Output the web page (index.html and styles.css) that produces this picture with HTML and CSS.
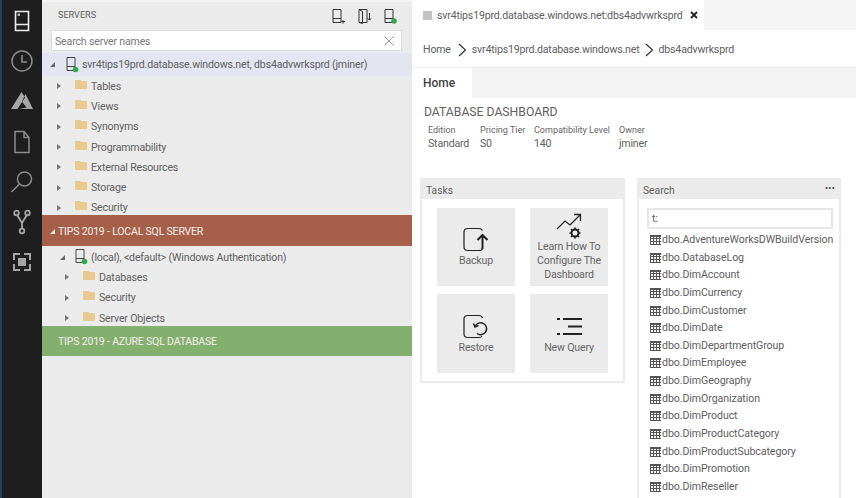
FILE: index.html
```html
<!DOCTYPE html>
<html lang="en">

<head>
    <meta charset="UTF-8">
    <title>Azure Data Studio</title>
    <link rel="stylesheet" href="styles.css">
</head>

<body>
    <div id="app">
        <nav class="activity">
            <div class="act"><svg width="16" height="22" viewBox="0 0 16 22"><path d="M1.500 1.500h13v19h-13zM1.500 14.500h13" fill="none" stroke="#eee" stroke-width="1.600"/><rect x="3.500" y="3.500" width="2.500" height="2.500" fill="#aaa"/></svg></div>
            <div class="act"><svg width="24" height="24" viewBox="0 0 24 24"><circle cx="12" cy="12" r="10" fill="none" stroke="#8c8c8c" stroke-width="1.500"/><path d="M12 6v7h5" fill="none" stroke="#8c8c8c" stroke-width="1.600"/></svg></div>
            <div class="act"><svg width="24" height="20" viewBox="0 0 24 20"><path d="M11.500 1L1 18h6.500L15 6.500zM15.500 3L23 18H9.500l7-1.500-4.500-6z" fill="#a6a6a6"/></svg></div>
            <div class="act"><svg width="18" height="24" viewBox="0 0 18 24"><path d="M2 1.500h9l5 6v15H2zM11 1.500v6h5" fill="none" stroke="#8c8c8c" stroke-width="1.500"/></svg></div>
            <div class="act"><svg width="24" height="24" viewBox="0 0 24 24"><circle cx="14.500" cy="9" r="7" fill="none" stroke="#8c8c8c" stroke-width="1.500"/><path d="M9.500 14L1.500 22" fill="none" stroke="#8c8c8c" stroke-width="1.600"/></svg></div>
            <div class="act"><svg width="18" height="26" viewBox="0 0 18 26"><g fill="none" stroke="#a6a6a6" stroke-width="1.800"><circle cx="3.500" cy="4" r="2.300"/><circle cx="14.500" cy="4" r="2.300"/><circle cx="9" cy="22" r="2.300"/><path d="M4.500 6.500L9 14l4.500-7.500M9 14v5.500"/></g></svg></div>
            <div class="act"><svg width="18" height="18" viewBox="0 0 18 18"><rect x="5" y="5" width="8" height="8" fill="#a6a6a6"/><path d="M7 1H1v6M11 1h6v6M7 17H1v-6M11 17h6v-6" fill="none" stroke="#a6a6a6" stroke-width="2"/></svg></div>
        </nav>

        <aside class="sidebar">
            <div class="side-head">
                <span class="side-title">SERVERS</span>
                <div class="side-tools">
                    <svg width="14" height="15" viewBox="0 0 14 15"><path d="M1 .5h8v13H1zM1 9.500h8M11 11v3.500M9.500 12.700h3.500" fill="none" stroke="#333" stroke-width="1"/></svg>
                    <svg width="14" height="15" viewBox="0 0 14 15"><path d="M1 .5h8v13H1zM1 .5l3.500 2v12L1 13.500M11.500 4v7M9.800 9.300l1.700 1.900 1.700-1.900" fill="none" stroke="#333" stroke-width="1"/></svg>
                    <svg width="14" height="15" viewBox="0 0 14 15"><path d="M1 .5h8v13H1zM1 9.500h8" fill="none" stroke="#333" stroke-width="1"/><circle cx="10" cy="12" r="2.800" fill="#2fa84f"/></svg>
                </div>
            </div>
            <div class="search-box">
                <span>Search server names</span>
                <svg width="10" height="10" viewBox="0 0 10 10"><path d="M.5.5l9 9M9.500.5l-9 9" stroke="#999" stroke-width="1"/></svg>
            </div>

            <div class="row server selected">
                <i class="arrow open"></i>
                <svg class="srv" width="13" height="16" viewBox="0 0 13 16"><path d="M1 .5h8v13H1zM1 9.500h8" fill="none" stroke="#444" stroke-width="1"/><circle cx="9.500" cy="12.500" r="2.800" fill="#2fa84f"/></svg>
                <span>svr4tips19prd.database.windows.net, dbs4advwrksprd (jminer)</span>
            </div>
            <div class="tree tree-a">
                <div class="row"><i class="arrow"></i><i class="folder"></i><span>Tables</span></div>
                <div class="row"><i class="arrow"></i><i class="folder"></i><span>Views</span></div>
                <div class="row"><i class="arrow"></i><i class="folder"></i><span>Synonyms</span></div>
                <div class="row"><i class="arrow"></i><i class="folder"></i><span>Programmability</span></div>
                <div class="row"><i class="arrow"></i><i class="folder"></i><span>External Resources</span></div>
                <div class="row"><i class="arrow"></i><i class="folder"></i><span>Storage</span></div>
                <div class="row"><i class="arrow"></i><i class="folder"></i><span>Security</span></div>
            </div>

            <div class="group brown"><i class="arrow open light"></i>TIPS 2019 - LOCAL SQL SERVER</div>
            <div class="row server local">
                <i class="arrow open"></i>
                <svg class="srv" width="13" height="16" viewBox="0 0 13 16"><path d="M1 .5h8v13H1zM1 9.500h8" fill="none" stroke="#444" stroke-width="1"/><circle cx="9.500" cy="12.500" r="2.800" fill="#2fa84f"/></svg>
                <span>(local), &lt;default&gt; (Windows Authentication)</span>
            </div>
            <div class="tree tree-b">
                <div class="row"><i class="arrow"></i><i class="folder"></i><span>Databases</span></div>
                <div class="row"><i class="arrow"></i><i class="folder"></i><span>Security</span></div>
                <div class="row"><i class="arrow"></i><i class="folder"></i><span>Server Objects</span></div>
            </div>
            <div class="group green">TIPS 2019 - AZURE SQL DATABASE</div>
        </aside>

        <main class="main">
            <div class="tabs">
                <div class="tab">
                    <i class="tab-icon"></i>
                    <span>svr4tips19prd.database.windows.net:dbs4advwrksprd</span>
                    <svg class="tab-close" width="8" height="8" viewBox="0 0 8 8"><path d="M1 1l6 6M7 1L1 7" stroke="#222" stroke-width="1.800"/></svg>
                </div>
            </div>
            <div class="crumbs">
                <span class="crumb-home">Home</span>
                <svg width="9" height="14" viewBox="0 0 9 14"><path d="M1 1l6.500 6L1 13" fill="none" stroke="#333" stroke-width="1.200"/></svg>
                <span>svr4tips19prd.database.windows.net</span>
                <svg width="9" height="14" viewBox="0 0 9 14"><path d="M1 1l6.500 6L1 13" fill="none" stroke="#333" stroke-width="1.200"/></svg>
                <span>dbs4advwrksprd</span>
            </div>
            <div class="home-bar"><div class="home-tab">Home</div></div>

            <section class="dash">
                <h1>DATABASE DASHBOARD</h1>
                <div class="props">
                    <div class="prop p1"><small>Edition</small>Standard</div>
                    <div class="prop p2"><small>Pricing Tier</small>S0</div>
                    <div class="prop p3"><small>Compatibility Level</small>140</div>
                    <div class="prop"><small>Owner</small>jminer</div>
                </div>
            </section>

            <div class="widgets">
                <section class="panel tasks">
                    <div class="panel-head">Tasks</div>
                    <div class="tiles">
                        <div class="tile">
                            <svg width="26" height="25" viewBox="0 0 26 25"><path d="M16 1.500H5Q1 1.500 1 5v15q0 3.500 4 3.500h11q3 0 3.500-2M16 1.500q2.500 0 3.500 2" fill="none" stroke="#222" stroke-width="1.200"/><path d="M19.500 22V9M14.500 13l5-5 5 5" fill="none" stroke="#222" stroke-width="2"/></svg>
                            <span>Backup</span>
                        </div>
                        <div class="tile learn">
                            <svg width="26" height="27" viewBox="0 0 26 27"><path d="M1 16l8-8 5 4 10-10M18 1.500h6.500V8" fill="none" stroke="#222" stroke-width="1.300"/><circle cx="19" cy="20" r="3.500" fill="none" stroke="#222" stroke-width="2"/><path d="M19 14.500v2M19 23.500v2M13.500 20h2M22.500 20h2M15 16l1.500 1.500M21.500 22.500L23 24M23 16l-1.500 1.500M16.500 22.500L15 24" stroke="#222" stroke-width="1.600"/></svg>
                            <span>Learn How To<br>Configure The<br>Dashboard</span>
                        </div>
                        <div class="tile low">
                            <svg width="26" height="25" viewBox="0 0 26 25"><path d="M16 1.500H5Q1 1.500 1 5v15q0 3.500 4 3.500h11q2 0 3-1.500M16 1.500q2.500 0 3.500 2.500" fill="none" stroke="#222" stroke-width="1.200"/><path d="M12 12.500a6 6 0 1 1 2 7" fill="none" stroke="#222" stroke-width="1.500"/><path d="M10.500 9.500l1.500 3.500 3.500-1.500" fill="none" stroke="#222" stroke-width="1.500"/></svg>
                            <span>Restore</span>
                        </div>
                        <div class="tile low">
                            <svg width="26" height="25" viewBox="0 0 26 25"><path d="M7 5h19M12 12.500h14M7 20h19" stroke="#222" stroke-width="2.200"/><path d="M1 4h3v2H1zM1 19h3v2H1z" fill="#222"/></svg>
                            <span>New Query</span>
                        </div>
                    </div>
                </section>

                <section class="panel search">
                    <div class="panel-head">Search<em>&#8226;&#8226;&#8226;</em></div>
                    <div class="search-body">
                        <div class="search-input">t:</div>
                        <ul class="results">
                            <li>dbo.AdventureWorksDWBuildVersion</li>
                            <li>dbo.DatabaseLog</li>
                            <li>dbo.DimAccount</li>
                            <li>dbo.DimCurrency</li>
                            <li>dbo.DimCustomer</li>
                            <li>dbo.DimDate</li>
                            <li>dbo.DimDepartmentGroup</li>
                            <li>dbo.DimEmployee</li>
                            <li>dbo.DimGeography</li>
                            <li>dbo.DimOrganization</li>
                            <li>dbo.DimProduct</li>
                            <li>dbo.DimProductCategory</li>
                            <li>dbo.DimProductSubcategory</li>
                            <li>dbo.DimPromotion</li>
                            <li>dbo.DimReseller</li>
                        </ul>
                    </div>
                </section>
            </div>
        </main>
    </div>
</body>

</html>
```

FILE: styles.css
```css
* {
    box-sizing: border-box;
}

html,
body {
    margin: 0;
    height: 100%;
    overflow: hidden;
}

body {
    font-family: Roboto, "Open Sans", sans-serif;
    font-size: 10.6px;
    letter-spacing: -.18px;
    color: #606060;
    background: #fff;
}

#app {
    display: flex;
    height: 498px;
    width: 856px;
}

/* activity bar */
.activity {
    width: 42px;
    flex: none;
    padding-top: 1px;
    background: #1e1e1e;
    border-left: 2px solid #27405f;
}

.act {
    height: 40.2px;
    display: flex;
    align-items: center;
    justify-content: center;
}

/* servers sidebar */
.sidebar {
    width: 370px;
    flex: none;
    background: #ebebeb;
    border-top: 2px solid #f4f4f4;
}

.side-head {
    height: 28px;
    display: flex;
    align-items: center;
    justify-content: space-between;
    padding: 0 14px 0 16px;
}

.side-title {
    margin-top: -2px;
    font-size: 9.1px;
    letter-spacing: 0;
}

.side-tools {
    display: flex;
    gap: 12px;
}

.search-box {
    height: 21px;
    margin: 0 10px 0 9px;
    padding: 1px 7px 0 3px;
    display: flex;
    align-items: center;
    justify-content: space-between;
    background: #fff;
    border: 1px solid #ddd;
    color: #777;
}

.row {
    height: 20.3px;
    display: flex;
    align-items: center;
    white-space: nowrap;
}

.row span {
    margin-left: 4px;
}

.selected {
    height: 23px;
    margin-top: 2px;
    padding-left: 8px;
    background: #e3e5f1;
}

.server .arrow {
    margin-right: 11px;
}

.server .srv {
    flex: none;
}

.server span {
    margin-left: 3px;
}

.local {
    margin-top: 1px;
    padding-left: 18px;
}

.local .arrow {
    margin-right: 10px;
}

.tree {
    overflow: hidden;
}

.tree-a {
    height: 139px;
    padding-left: 15px;
}

.tree-b {
    height: 59px;
    padding-left: 23px;
}

.arrow {
    width: 0;
    height: 0;
    flex: none;
    border-left: 4px solid #777;
    border-top: 3px solid transparent;
    border-bottom: 3px solid transparent;
    margin-right: 14px;
}

.arrow.open {
    border-left: 5px solid transparent;
    border-top: 0;
    border-bottom: 5px solid #666;
}

.arrow.light {
    border-bottom-color: #f2e5e0;
    margin-right: 3px;
}

.folder {
    position: relative;
    width: 12px;
    height: 8px;
    flex: none;
    background: #e8c98f;
    border-radius: 1px;
    margin-top: -3px;
}

.folder::before {
    content: "";
    position: absolute;
    left: 0;
    top: -1px;
    width: 6px;
    height: 2px;
    background: #e8c98f;
}

.group {
    display: flex;
    align-items: center;
    padding: 1px 0 0 8px;
    height: 31px;
    color: #f4eeea;
    font-size: 10.5px;
}

.brown {
    background: #a6604a;
}

.green {
    height: 30px;
    padding-left: 16px;
    background: #83b06f;
}

/* editor */
.main {
    flex: 1;
    min-width: 0;
}

.tabs {
    height: 30px;
    display: flex;
    background: #f5f5f5;
}

.tab {
    width: 292px;
    display: flex;
    align-items: center;
    padding-left: 11px;
    background: #fff;
    white-space: nowrap;
}

.tab-icon {
    width: 9px;
    height: 9px;
    flex: none;
    background: #c4c4c4;
    margin-right: 5px;
}

.tab-close {
    margin-left: 7px;
    flex: none;
}

.crumbs {
    height: 38px;
    display: flex;
    align-items: center;
    gap: 5px;
    padding: 2px 0 0 11px;
    border-bottom: 1px solid #ececec;
}

.crumb-home {
    margin-right: 2px;
}

.home-bar {
    height: 30px;
    background: #f3f3f3;
}

.home-tab {
    width: 60px;
    height: 100%;
    padding-left: 11px;
    line-height: 31px;
    background: #fff;
    font-size: 12px;
    font-weight: 500;
    letter-spacing: 0;
    color: #444;
}

.dash {
    height: 80px;
    padding: 6px 0 0 12px;
}

.dash h1 {
    margin: 0 0 3px;
    font-size: 12.2px;
    font-weight: 400;
    line-height: 16px;
    letter-spacing: 0;
}

.props {
    display: flex;
    padding-left: 4px;
}

.prop {
    line-height: 14px;
}

.prop small {
    display: block;
    font-size: 9px;
    line-height: 14px;
    letter-spacing: 0;
    color: #666;
}

.p1 {
    width: 52px;
}

.p2 {
    width: 54px;
}

.p3 {
    width: 85px;
}

.widgets {
    display: flex;
    align-items: flex-start;
    gap: 12px;
    padding-left: 8px;
}

.panel {
    border: 2px solid #ebebeb;
    border-top: 0;
    background: #fff;
}

.panel-head {
    display: flex;
    justify-content: space-between;
    align-items: center;
    height: 21px;
    margin: 0 -2px;
    padding: 3px 6px 0;
    background: #ebebeb;
    font-size: 10.3px;
    letter-spacing: 0;
}

.panel-head em {
    margin-top: -5px;
    font-style: normal;
    color: #333;
    letter-spacing: .3px;
    font-size: 9px;
}

.tasks {
    width: 205px;
    height: 205px;
}

.tiles {
    display: grid;
    grid-template-columns: 78px 78px;
    grid-template-rows: 78px 79px;
    column-gap: 15px;
    row-gap: 8px;
    padding: 9px 0 0 15px;
}

.tile {
    display: flex;
    flex-direction: column;
    align-items: center;
    justify-content: center;
    background: #ebebeb;
    text-align: center;
    line-height: 14px;
    color: #666;
}

.tile svg {
    margin-bottom: 2px;
}

.tile.learn svg {
    margin-bottom: 0;
}

.tile.low {
    padding-top: 2px;
}

.search {
    width: 204px;
    height: 340px;
}

.search-body {
    padding: 9px 6px 0 8px;
}

.search-input {
    height: 21px;
    padding-left: 3px;
    line-height: 18px;
    border: 2px solid #e6e6e6;
}

.results {
    list-style: none;
    margin: 2px 0 0;
    padding: 0;
}

.results li {
    height: 17.65px;
    line-height: 17.65px;
    padding-left: 15px;
    letter-spacing: -.08px;
    overflow: hidden;
    white-space: nowrap;
    background:
        linear-gradient(#555, #555) 3px 4px / 11px 2px no-repeat,
        repeating-linear-gradient(90deg, #555 0 1px, transparent 1px 3px) 3px 4px / 11px 10px no-repeat,
        repeating-linear-gradient(0deg, #555 0 1px, transparent 1px 3px) 3px 4px / 11px 10px no-repeat;
}
```
